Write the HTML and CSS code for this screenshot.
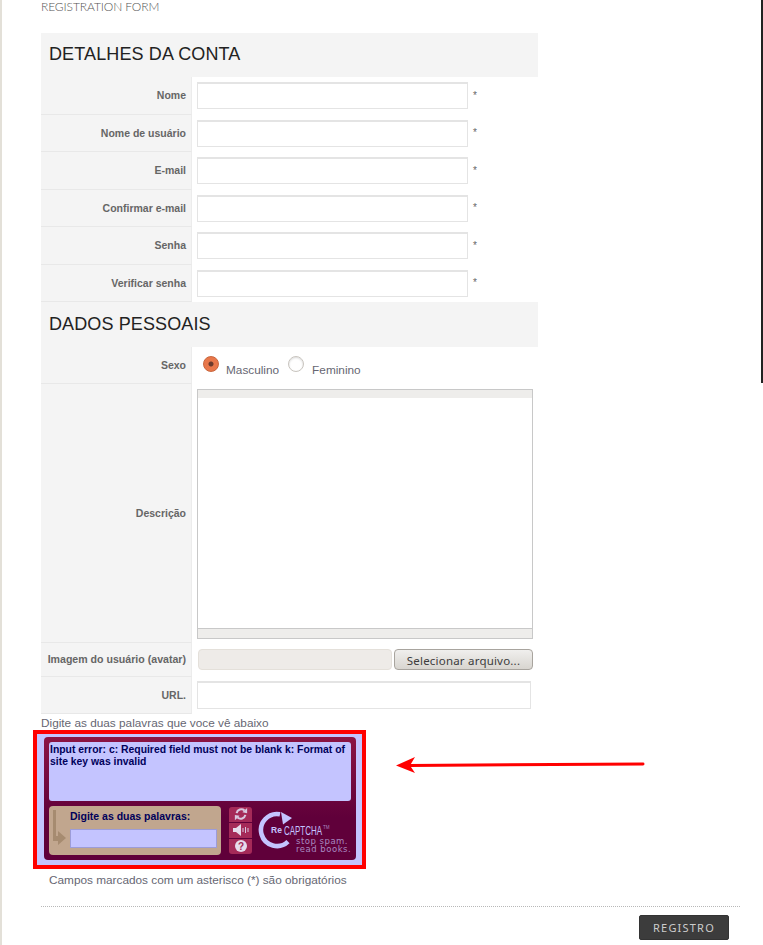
FILE: index.html
```html
<!DOCTYPE html>
<html lang="pt-BR">
<head>
    <meta charset="UTF-8">
    <title>Registration form</title>
    <link rel="stylesheet" href="styles.css">
</head>
<body>

<div class="side-bar"></div>

<svg class="arrow" width="250" height="20" viewBox="0 0 250 20">
    <path d="M247 9 L13 10.5" stroke="#f00" stroke-width="3" stroke-linecap="round" fill="none"/>
    <path d="M0 10.5 L19 2 L14 10.5 L19 18 Z" fill="#f00"/>
</svg>

<div class="page">
    <p class="page-title">REGISTRATION FORM</p>

    <form class="reg-form">
        <h2 class="section">DETALHES DA CONTA</h2>
        <div class="row"><label>Nome</label><div class="field"><input type="text" class="txt"><span class="req">*</span></div></div>
        <div class="row"><label>Nome de usuário</label><div class="field"><input type="text" class="txt"><span class="req">*</span></div></div>
        <div class="row"><label>E-mail</label><div class="field"><input type="text" class="txt"><span class="req">*</span></div></div>
        <div class="row"><label>Confirmar e-mail</label><div class="field"><input type="text" class="txt"><span class="req">*</span></div></div>
        <div class="row"><label>Senha</label><div class="field"><input type="text" class="txt"><span class="req">*</span></div></div>
        <div class="row"><label>Verificar senha</label><div class="field"><input type="text" class="txt"><span class="req">*</span></div></div>

        <h2 class="section section-2">DADOS PESSOAIS</h2>
        <div class="row row-sex">
            <label>Sexo</label>
            <div class="field">
                <span class="radio radio-on"></span><span class="radio-label">Masculino</span>
                <span class="radio"></span><span class="radio-label">Feminino</span>
            </div>
        </div>
        <div class="row row-desc">
            <label>Descrição</label>
            <div class="field">
                <div class="editor">
                    <div class="editor-bar"></div>
                    <div class="editor-body"></div>
                    <div class="editor-bar-bottom"></div>
                </div>
            </div>
        </div>
        <div class="row row-file">
            <label>Imagem do usuário (avatar)</label>
            <div class="field">
                <span class="file-name"></span>
                <span class="file-btn">Selecionar arquivo...</span>
            </div>
        </div>
        <div class="row row-url">
            <label>URL.</label>
            <div class="field"><input type="text" class="txt txt-url"></div>
        </div>
    </form>

    <p class="captcha-hint">Digite as duas palavras que voce vê abaixo</p>

    <div class="captcha-outline">
        <div class="captcha">
            <div class="captcha-msg">Input error: c: Required field must not be blank k: Format of site key was invalid</div>
            <div class="captcha-bottom">
                <div class="captcha-entry">
                    <svg class="entry-arrow" width="21" height="38" viewBox="0 0 21 38">
                        <path d="M4 0 V26 H6 V21 L14 28 L6 35 V31 H1 V0 Z" fill="#a68b70"/>
                    </svg>
                    <div class="entry-col">
                        <div class="entry-label">Digite as duas palavras:</div>
                        <div class="entry-input"></div>
                    </div>
                </div>
                <div class="captcha-btns">
                    <div class="cap-btn">
                        <svg width="14" height="14" viewBox="0 0 16 16">
                            <path d="M3 7 A5.5 5.5 0 0 1 12 4" stroke="#d9c8e0" stroke-width="2.4" fill="none"/>
                            <path d="M13 9 A5.5 5.5 0 0 1 4 12" stroke="#d9c8e0" stroke-width="2.4" fill="none"/>
                            <path d="M9.5 6 L15 7 L15 1 Z M6.5 10 L1 9 L1 15 Z" fill="#d9c8e0"/>
                        </svg>
                    </div>
                    <div class="cap-btn">
                        <svg width="16" height="12" viewBox="0 0 16 12">
                            <path d="M0 4 H3 L8 0 V12 L3 8 H0 Z" fill="#e6dcec"/>
                            <path d="M10 4 V8 M12.5 3 V9 M15 4 V8" stroke="#d9c8e0" stroke-width="1"/>
                        </svg>
                    </div>
                    <div class="cap-btn">
                        <svg width="12" height="12" viewBox="0 0 12 12">
                            <circle cx="6" cy="6" r="6" fill="#e6dcec"/>
                            <text x="6" y="9.5" text-anchor="middle" class="help-mark">?</text>
                        </svg>
                    </div>
                </div>
                <svg class="captcha-logo" width="93" height="49" viewBox="0 0 93 49">
                    <path d="M22 8.3 A16 16 0 1 0 30 35.6" stroke="#c4c4ff" stroke-width="4.6" fill="none"/>
                    <path d="M23 6 L34 12 L25 18.5 Z" fill="#c4c4ff"/>
                    <text x="13" y="27" class="logo-re">Re</text>
                    <text x="26" y="29" class="logo-cap" textLength="38" lengthAdjust="spacingAndGlyphs">CAPTCHA</text>
                    <text x="65" y="23" class="logo-tm">TM</text>
                    <text x="38" y="38" class="logo-tag">stop spam.</text>
                    <text x="38" y="46" class="logo-tag">read books.</text>
                </svg>
            </div>
        </div>
    </div>

    <p class="req-note">Campos marcados com um asterisco (*) são obrigatórios</p>

    <div class="form-actions">
        <button type="button" class="btn-register">REGISTRO</button>
    </div>
</div>

</body>
</html>
```

FILE: styles.css
```css
html, body {
    margin: 0;
    padding: 0;
    height: 945px;
    overflow: hidden;
}

body {
    position: relative;
    background-color: #fff;
    font-family: "Liberation Sans", Arial, sans-serif;
    color: #666672;
    border-left: 2px solid #e3e0d8;
    box-sizing: border-box;
}

.side-bar {
    position: absolute;
    top: 0;
    right: 0;
    width: 2px;
    height: 383px;
    background-color: #222;
}

.arrow {
    position: absolute;
    left: 394px;
    top: 755px;
}

.page {
    padding-left: 39px;
    width: 699px;
}

.page-title {
    margin: 0;
    height: 33px;
    font-family: Lato, sans-serif;
    font-weight: 300;
    font-size: 12px;
    line-height: 13px;
    letter-spacing: -0.1px;
    color: #555;
}

.reg-form {
    width: 497px;
}

.section {
    margin: 0;
    height: 44px;
    padding-left: 8px;
    background-color: #f4f4f4;
    font-weight: normal;
    font-size: 18px;
    letter-spacing: 0.12px;
    line-height: 43px;
    color: #222;
}

.section-2 {
    height: 45px;
    line-height: 45px;
}

.row {
    display: flex;
    height: 37.5px;
}

.row label {
    flex: 0 0 145px;
    padding-right: 5px;
    background-color: #f4f4f4;
    border-right: 1px solid #ececec;
    border-bottom: 1px solid #e8e8e8;
    display: flex;
    align-items: center;
    justify-content: flex-end;
    font-size: 10.5px;
    font-weight: bold;
    color: #666;
}

.field {
    flex: 1;
    display: flex;
    align-items: center;
    padding-left: 5px;
    background-color: #fff;
}

.txt {
    width: 271px;
    height: 27px;
    margin: 0;
    padding: 0;
    box-sizing: border-box;
    border: 1px solid #e4e4e4;
    border-top-width: 2px;
    background-color: #fff;
}

.txt-url {
    width: 334px;
    height: 28px;
}

.req {
    margin: -1px 0 0 5px;
    font-size: 10px;
    color: #666;
}

.row-sex {
    height: 36.5px;
}

.radio {
    width: 16px;
    height: 16px;
    margin: -3px 0 0 6px;
    box-sizing: border-box;
    border: 1px solid #c8c4be;
    border-radius: 50%;
    background-color: #fff;
    box-shadow: inset 0 1px 2px rgba(0, 0, 0, 0.15);
}

.radio-on {
    border-color: #c9653c;
    background: radial-gradient(circle, #6b3a2c 0, #6b3a2c 2px, #e8774a 3px);
    box-shadow: none;
}

.radio-label {
    margin: 9px 9px 0 7px;
    font-size: 11.8px;
    color: #666672;
}

.radio-label + .radio {
    margin-left: 0;
}

.radio-label:last-child {
    margin-left: 8px;
}

.row-desc {
    height: 259px;
}

.editor {
    width: 336px;
    height: 250px;
    margin-top: 2px;
    box-sizing: border-box;
    border: 1px solid #c8c8c8;
    display: flex;
    flex-direction: column;
}

.editor-bar {
    height: 8px;
    background-color: #eeedeb;
}

.editor-body {
    flex: 1;
    background-color: #fff;
    border-bottom: 1px solid #c8c8c8;
}

.editor-bar-bottom {
    height: 9px;
    background-color: #eeedeb;
}

.row-file {
    height: 34px;
}

.row-file label {
    font-size: 10.6px;
}

.file-name {
    width: 194px;
    height: 21px;
    margin-left: 1px;
    box-sizing: border-box;
    border: 1px solid #e4e0da;
    border-radius: 4px;
    background-color: #eeebe8;
}

.file-btn {
    width: 139px;
    height: 21px;
    margin-left: 2px;
    box-sizing: border-box;
    border: 1px solid #a8a49e;
    border-radius: 4px;
    background: linear-gradient(#f0efed, #d8d5d0);
    font-family: "Noto Sans", sans-serif;
    font-size: 11.5px;
    line-height: 21px;
    text-align: center;
    letter-spacing: 0.2px;
    color: #3c3c3c;
}

.row-url {
    height: 37px;
}

.captcha-hint {
    margin: 0;
    height: 16px;
    font-size: 11.8px;
    line-height: 18px;
    color: #666672;
}

.captcha-outline {
    width: 333px;
    height: 139px;
    margin-left: -8px;
    box-sizing: border-box;
    border: 4px solid #f00;
    background-color: #c4c4ff;
    padding: 3px 0 0 7px;
}

.captcha {
    width: 312px;
    height: 123px;
    box-sizing: border-box;
    padding: 5px;
    border-radius: 4px;
    background: linear-gradient(#8c1444, #60003a 65%);
}

.captcha-msg {
    height: 59px;
    box-sizing: border-box;
    padding: 2px 1px 1px;
    border-radius: 3px;
    background-color: #c4c4ff;
    font-size: 10.4px;
    line-height: 12px;
    font-weight: bold;
    color: #00005a;
}

.captcha-bottom {
    display: flex;
    margin-top: 5px;
}

.captcha-entry {
    display: flex;
    flex: 0 0 172px;
    height: 49px;
    box-sizing: border-box;
    border-radius: 4px;
    background-color: #c1a68e;
}

.entry-arrow {
    flex: 0 0 21px;
    margin: 4px 0 0 3px;
}

.entry-col {
    margin-left: -3px;
}

.entry-label {
    margin-top: 4px;
    height: 19px;
    font-size: 10.5px;
    line-height: 13px;
    font-weight: bold;
    color: #00005a;
}

.entry-input {
    width: 147px;
    height: 19px;
    box-sizing: border-box;
    border: 1px solid #9c9cd8;
    background-color: #c4c4ff;
}

.captcha-btns {
    flex: 0 0 23px;
    height: 47px;
    margin: 1px 0 0 8px;
    border-radius: 3px;
    background-color: #a52a58;
    display: flex;
    flex-direction: column;
}

.cap-btn {
    flex: 1;
    display: flex;
    align-items: center;
    justify-content: center;
    border-bottom: 1px solid #60003a;
}

.cap-btn:last-child {
    border-bottom: none;
}

.help-mark {
    font-family: "Liberation Sans", sans-serif;
    font-size: 10px;
    font-weight: bold;
    fill: #a52a58;
}

.captcha-logo {
    flex: 0 0 93px;
    margin-left: 6px;
}

.logo-re {
    font-family: "Liberation Sans", sans-serif;
    font-size: 8.5px;
    font-weight: bold;
    fill: #c4c4ff;
}

.logo-cap {
    font-family: "Liberation Sans", sans-serif;
    font-size: 13px;
    fill: #c4c4ff;
}

.logo-tm {
    font-family: "Liberation Sans", sans-serif;
    font-size: 4.5px;
    fill: #a888c0;
}

.logo-tag {
    font-family: "DejaVu Sans", sans-serif;
    font-size: 8.5px;
    letter-spacing: 0.5px;
    fill: #a888c0;
}

.req-note {
    margin: 5px 0 0 8px;
    height: 22px;
    font-size: 11.8px;
    line-height: 13px;
    color: #666672;
}

.form-actions {
    border-top: 1px dotted #b8b8b8;
    display: flex;
    justify-content: flex-end;
    padding: 8px 11px 0 0;
    margin-top: 10px;
}

.btn-register {
    width: 90px;
    height: 25px;
    margin: 0;
    padding: 0;
    border: 1px solid #333;
    border-radius: 2px;
    background-color: #3c3c3c;
    font-family: "Noto Sans", sans-serif;
    font-size: 11px;
    letter-spacing: 1.2px;
    color: #ccc;
}
```
